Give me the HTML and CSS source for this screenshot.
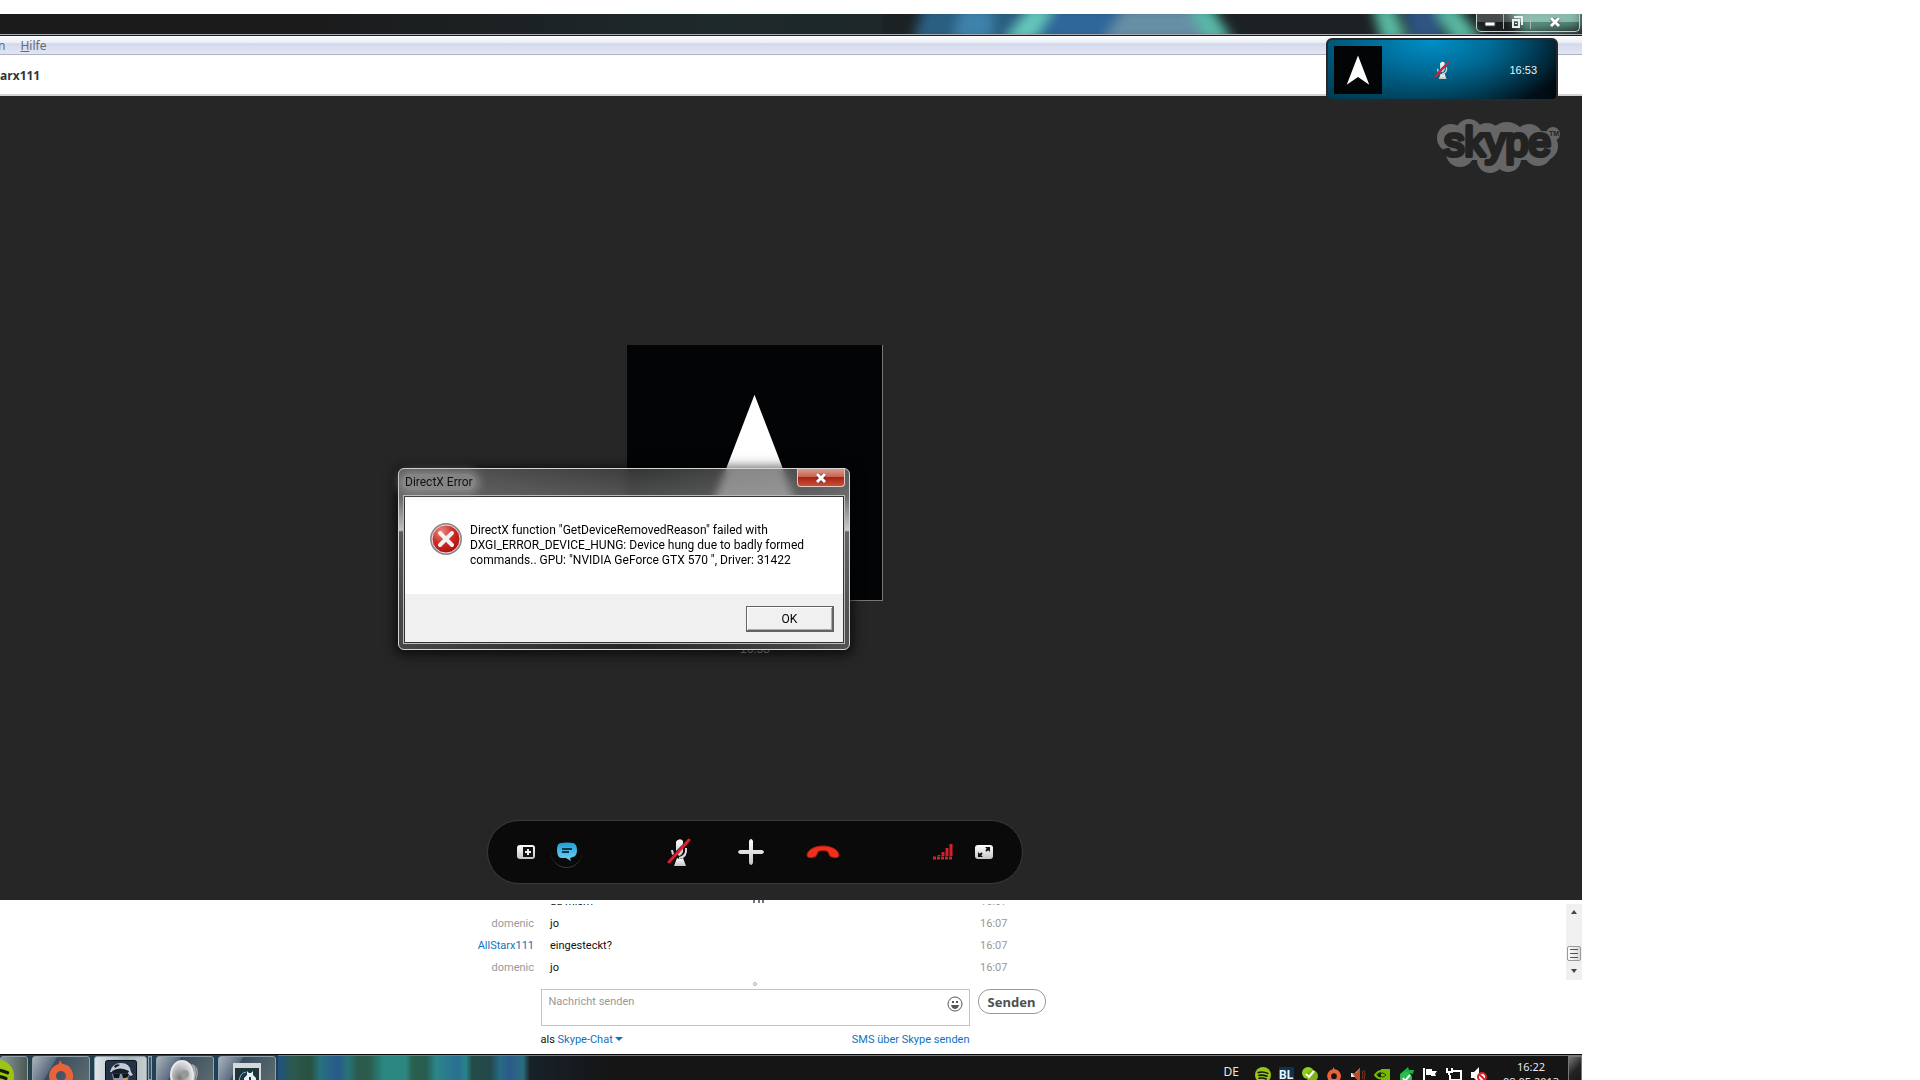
FILE: index.html
```html
<!DOCTYPE html>
<html lang="de">
<head>
<meta charset="utf-8">
<title>Skype</title>
<link rel="stylesheet" href="styles.css">
</head>
<body>
<svg class="defs" aria-hidden="true">
  <defs>
    <filter id="soft" x="-10%" y="-50%" width="120%" height="200%"><feGaussianBlur stdDeviation="6"/></filter>
    <linearGradient id="light" x1="0" y1="0" x2="0" y2="1"><stop offset="0" stop-color="#fff"/><stop offset="1" stop-color="#c4c4c4"/></linearGradient>
    <linearGradient id="bubble" x1="0" y1="0" x2="0" y2="1"><stop offset="0" stop-color="#1f9fd6"/><stop offset="1" stop-color="#6fd3fa"/></linearGradient>
    <radialGradient id="danger" cx=".35" cy=".25" r=".8"><stop offset="0" stop-color="#ea8a84"/><stop offset=".5" stop-color="#cf2a24"/><stop offset="1" stop-color="#a80c0c"/></radialGradient>
    <radialGradient id="cone" cx=".4" cy=".6" r=".7"><stop offset="0" stop-color="#777"/><stop offset=".6" stop-color="#c4c6c8"/><stop offset="1" stop-color="#eee"/></radialGradient>
    <symbol id="arrow" viewBox="0 0 256 256"><path fill="#fff" d="M128 50 188 206 128 165 68 206Z"/></symbol>
    <symbol id="mic-off" viewBox="0 0 24 28">
      <path fill="url(#light)" d="M9 4a4 4 0 0 1 7-1v3L9 13ZM10 16l6-6v4q-1 3-4 4ZM4 12h2l1 4-2 1Z"/>
      <path fill="none" stroke="#ddd" stroke-width="2" d="M19 10q1 9-7 10"/>
      <path fill="url(#light)" d="M10 20q3 2 6 0l3 8H7Z"/>
      <path stroke="#e01b32" stroke-width="3" stroke-linecap="round" d="M2 24 22 2"/>
    </symbol>
    <symbol id="swirl" viewBox="0 0 24 28"><path fill="#e8633a" fill-rule="evenodd" d="M12 0q-3 3-2 4A12 12 0 1 0 22 9q-2-4-8-5-3-1-2-4ZM12 11a5 5 0 1 1 0 10 5 5 0 0 1 0-10Z"/></symbol>
    <symbol id="waves" viewBox="0 0 20 20"><circle cx="10" cy="10" r="10" fill="#9bc516"/><path fill="none" stroke="#141a08" stroke-width="2" stroke-linecap="round" d="M4 7q6-2 12 1M5 10.500q5-1 10 1M5 14q5-1 9 1"/></symbol>
  </defs>
</svg>

<main class="desktop">
  <header class="titlebar">
    <svg class="aero" viewBox="0 0 700 20" preserveAspectRatio="none" aria-hidden="true">
      <rect width="700" height="20" fill="#1c2224"/>
      <g filter="url(#soft)">
        <path fill="#2b5f82" d="M42 -8H170L140 28H30Z"/>
        <path fill="#3c82aa" d="M80 -8H110V28H70Z"/>
        <path fill="#2f689b" d="M175 -8H260V28H150Z"/>
        <path fill="#668fa5" d="M245 -8H315L335 28H220Z"/>
        <path fill="#65c8bd" d="M150 -8H174L150 28H122Z"/>
        <path fill="#58b8a8" d="M305 -8H329L352 28H326Z"/>
        <path fill="#58b8a0" d="M490 -8H512L526 28H500Z"/>
        <path fill="#2d5583" d="M520 -8H560V28H530Z"/>
        <path fill="#58b8a0" d="M552 -8H574L602 28H570Z"/>
        <path fill="#70b09c" d="M625 -8H700V14L640 20Z"/>
      </g>
    </svg>
    <div class="caption">
      <button aria-label="Minimieren"><svg width="12" height="12"><path fill="#fff" stroke="#444" d="M1 6h10v4H1Z"/></svg></button>
      <button aria-label="Verkleinern"><svg width="12" height="12" fill="none" stroke="#eee" stroke-width="2"><path d="M4 2V1h7v7h-1M2 4h6v7H2ZM5 7v1"/></svg></button>
      <button class="caption-close" aria-label="Schließen"><svg width="12" height="10"><path stroke="#444" stroke-width="4" d="M2 1l8 8M10 1 2 9"/><path stroke="#fff" stroke-width="3" d="M2 1l8 8M10 1 2 9"/></svg></button>
    </div>
  </header>
  <nav class="menubar"><a href="#">n</a><a href="#"><u>H</u>ilfe</a></nav>
  <h1 class="contact">arx111</h1>

  <aside class="mini-call">
    <svg class="mini-avatar"><use href="#arrow"/></svg>
    <svg width="16" height="18"><use href="#mic-off"/></svg>
    <span>16:53</span>
  </aside>

  <section class="call">
    <svg class="logo" width="126" height="58" viewBox="0 0 126 58" role="img" aria-label="skype">
      <g fill="#666"><circle cx="15" cy="20" r="14"/><circle cx="33" cy="14" r="13"/><circle cx="51" cy="19" r="14"/><circle cx="71" cy="23" r="19"/><circle cx="93" cy="20" r="14"/><circle cx="107" cy="28" r="15"/><circle cx="24" cy="35" r="14"/><circle cx="102" cy="34" r="14"/><circle cx="54" cy="42" r="13"/><circle cx="72" cy="41" r="13"/><path d="M20 14H112V42H20Z"/><circle cx="117" cy="16" r="7"/></g>
      <text class="logo-word" x="8" y="38">skype</text>
      <text class="logo-tm" x="113" y="18">TM</text>
    </svg>
    <figure class="peer">
      <svg class="peer-avatar"><use href="#arrow"/></svg>
      <figcaption>16:53</figcaption>
    </figure>
    <div class="controls">
      <div class="group">
        <button aria-label="Seitenleiste"><svg width="18" height="14"><rect width="18" height="14" rx="3" fill="url(#light)"/><path fill="#111" d="M6 2h10v10H6Z"/><path stroke="#eee" stroke-width="2" fill="none" d="M8 7h6M11 4v6"/></svg></button>
        <button class="chat-toggle" aria-label="Chat"><svg width="22" height="20"><path fill="url(#bubble)" d="M5 1q6-1 12 0 4 1 4 7t-4 7l-3 1 1 3-5-3H5Q1 15 1 8t4-7Z"/><path stroke="#123646" stroke-width="2" d="M6 7h10M6 10h7"/></svg></button>
      </div>
      <div class="group main-group">
        <button aria-label="Mikrofon"><svg width="24" height="28"><use href="#mic-off"/></svg></button>
        <button aria-label="Hinzufügen"><svg width="26" height="28"><path fill="url(#light)" d="M11 3q2-4 4 0v9l9 0q4 2 0 4h-9v9q-2 4-4 0v-9H2q-4-2 0-4h9Z"/></svg></button>
        <button aria-label="Auflegen"><svg width="34" height="14"><path fill="#f0301c" stroke="#b51d10" d="M1 10C2 4 10 1 17 1s15 3 16 9c0 3-4 3-7 2-3 0-3-5-5-6q-4-1-8 0c-2 1-2 6-5 6-3 1-7 1-7-2Z"/></svg></button>
      </div>
      <div class="group">
        <button aria-label="Verbindung"><svg width="20" height="16" fill="none" stroke="#d3202f" stroke-width="3"><path d="M6 12v-1M10 12V8M14 12V4M18 12V0"/><path stroke-dasharray="3 1" d="M0 14h20"/></svg></button>
        <button aria-label="Vollbild"><svg width="18" height="14"><rect width="18" height="14" rx="3" fill="url(#light)"/><path fill="#111" d="M3 7l5 5H3ZM10 2h5v5Z"/><path stroke="#111" stroke-width="2" d="M4 11l3-3M14 3l-3 3"/></svg></button>
      </div>
    </div>
  </section>

  <section class="chat">
    <svg class="grip" width="12" height="3" fill="#6f7580"><path d="M0 0h2v3H0ZM5 0h2v3H5ZM9 0h2v3H9Z"/></svg>
    <div class="log-wrap">
      <div class="log">
        <p class="line"><span class="who"></span><span>du mich?</span><time>16:07</time></p>
        <p class="line"><span class="who">domenic</span><span>jo</span><time>16:07</time></p>
        <p class="line"><span class="who peer-name">AllStarx111</span><span>eingesteckt?</span><time>16:07</time></p>
        <p class="line"><span class="who">domenic</span><span>jo</span><time>16:07</time></p>
      </div>
      <div class="scroll">
        <svg width="6" height="4"><path fill="#444" d="M0 4 3 0l3 4Z"/></svg>
        <div class="thumb"><svg width="8" height="9"><path stroke="#555" d="M0 .5h8M0 4.500h8M0 8.500h8"/></svg></div>
        <svg width="6" height="4"><path fill="#444" d="M0 0h6L3 4Z"/></svg>
      </div>
    </div>
    <div class="compose">
      <i class="dot"></i>
      <div class="box">
        <input type="text" placeholder="Nachricht senden" aria-label="Nachricht senden">
        <button class="smile" aria-label="Emoticon"><svg width="16" height="16"><circle cx="8" cy="8" r="7" fill="none" stroke="#555"/><path fill="#555" d="M5 5h2v2H5ZM9 5h2v2H9ZM4 9h8q-1 4-4 4T4 9Z"/></svg></button>
      </div>
      <button class="send">Senden</button>
      <div class="modes"><span>als <a href="#">Skype-Chat <svg width="8" height="4"><path fill="#0f72c0" d="M0 0h8L4 4Z"/></svg></a></span><a href="#">SMS über Skype senden</a></div>
    </div>
  </section>

  <footer class="taskbar">
    <div class="tasks">
      <button class="task first" aria-label="Spotify"><svg width="32" height="32"><use href="#waves"/></svg></button>
      <button class="task" aria-label="Origin"><svg width="24" height="28"><use href="#swirl"/></svg></button>
      <button class="task active" aria-label="Spiel"><svg width="32" height="32"><rect x=".5" y=".5" width="31" height="31" rx="2" fill="#243247" stroke="#0a0f18"/><path fill="#c3cbd6" d="M5 12Q7 3 16 3t10 9l2 3-3 1-3-4H5Z"/><path fill="#161c28" d="M9 6q3-3 6-1l-5 3ZM7 11q8-5 17 0l-1 2H8Z"/><path fill="#8a97a8" d="M7 14h17l-2 13H10Z"/><path fill="#10141c" d="M8 14h7l-1 4H9ZM17 14h7l-2 4h-4ZM10 20h6v6h-5Z"/><path fill="#f7951d" d="M16 23q1-4 3-4l3-2-1 7-4 2Z"/></svg></button>
      <i class="stack"></i>
      <button class="task" aria-label="Lautsprecher"><svg width="30" height="30"><path fill="#aeb2b6" d="M14 3q10 0 13 5 2 6-1 12l-11 6Z"/><path fill="none" stroke="#777" d="M21 4q5 8 0 18M25 6q3 7 0 14"/><ellipse cx="12" cy="15" rx="11" ry="14" fill="url(#cone)" stroke="#e6e8ea" stroke-width="2"/><circle cx="15" cy="14" r="4" fill="#95999c"/></svg></button>
      <button class="task" aria-label="Programm"><svg class="low" width="28" height="28"><path fill="#d5d8da" d="M0 0h28v28H0Z"/><path fill="#2b3032" d="M2 5h24v23H2Z"/><path fill="#143842" d="M4 7h20v21H4Z"/><path fill="none" stroke="#9ab" d="M6 18q1-8 7-9"/><path fill="#e7f0f2" d="M14 8l2 2h2l2-2v4l3 3v3h-2v10h-8V18h-2v-3l3-3Z"/><path fill="#233" d="M16 14h2v14h-2Z"/></svg></button>
    </div>
    <div class="wall"></div>
    <div class="tray">
      <span class="lang">DE</span>
      <svg width="16" height="16"><use href="#waves"/></svg>
      <span class="bl">BL</span>
      <svg width="16" height="16"><circle cx="6" cy="6" r="6" fill="#8fcf1c"/><circle cx="10" cy="9" r="6" fill="#7cb518"/><path fill="none" stroke="#fff" stroke-width="2" d="M4 7l3 3 5-6"/></svg>
      <svg width="16" height="16"><use href="#swirl"/></svg>
      <svg width="16" height="16"><path fill="#e8e0dc" d="M1 6h4l5-5v14l-5-5H1Z"/><path fill="#c0482b" d="M2 6h4l4-5v14l-5-5Z"/><path fill="none" stroke="#7c3524" d="M12 4q2 4 0 8M14 3q2 5 0 10"/></svg>
      <svg width="16" height="16"><path fill="#76b900" d="M7 2h9v12H7Z"/><path fill="none" stroke="#76b900" stroke-width="2" d="M1 8q6-8 13 0-7 7-13 0Z"/><path stroke="#243a05" fill="none" d="M4 8q4-4 8 0-4 4-6 0"/></svg>
      <svg width="16" height="18"><path fill="#1fae45" d="M2 7l8-7 1 3h5l-1 4-4-1v10H2Z"/><circle cx="8" cy="11" r="6" fill="#2bbd52"/><path fill="none" stroke="#fff" stroke-width="2" d="M5 11l2 3 5-6"/></svg>
      <svg width="16" height="16"><path fill="#fff" d="M1 1h2v15H1ZM4 2h6v2h5l-2 3 1 2H9V8H4Z"/></svg>
      <svg width="16" height="16" fill="none" stroke="#fff" stroke-width="2"><path d="M7 4h8v9H4V8M1 1v4h5V1M3 5v3"/></svg>
      <svg width="17" height="16"><path fill="#fff" d="M1 5h3l5-5v16l-5-5H1Z"/><circle cx="12" cy="10" r="4" fill="#fff" stroke="#d5242c" stroke-width="2"/><path stroke="#d5242c" stroke-width="2" d="M9 7l6 6"/></svg>
      <time class="clock">16:22<br>08.05.2013</time>
      <button class="peek" aria-label="Desktop anzeigen"></button>
    </div>
  </footer>

  <div class="dialog" role="dialog" aria-labelledby="dlg">
    <div class="dialog-head"><h2 id="dlg">DirectX Error</h2><button class="dialog-close" aria-label="Schließen"><svg width="12" height="10"><path stroke="#5a2a28" stroke-width="4" d="M2 1l8 8M10 1 2 9"/><path stroke="#fff" stroke-width="3" d="M2 1l8 8M10 1 2 9"/></svg></button></div>
    <div class="dialog-inner">
      <div class="dialog-body">
        <svg width="32" height="32"><circle cx="16" cy="16" r="15" fill="url(#danger)" stroke="#8a8a8a" stroke-width="2"/><circle cx="16" cy="16" r="14" fill="none" stroke="#f3dada"/><path stroke="#f2f2f2" stroke-width="4" stroke-linecap="round" d="M10 10l12 12M22 10 10 22"/></svg>
        <p>DirectX function "GetDeviceRemovedReason" failed with<br>DXGI_ERROR_DEVICE_HUNG: Device hung due to badly formed<br>commands.. GPU: "NVIDIA GeForce GTX 570 ", Driver: 31422</p>
      </div>
      <div class="dialog-foot"><button class="ok">OK</button></div>
    </div>
  </div>
</main>
</body>
</html>
```
FILE: styles.css
```css
* { box-sizing: border-box; }
body { margin: 0; background: #fff; font: 11px/14px "Noto Sans", "Open Sans", sans-serif; color: #111; }
button { margin: 0; padding: 0; border: 0; background: none; font: inherit; color: inherit; }
svg { display: block; flex: none; }
a { color: #0f72c0; text-decoration: none; }
h1, h2, p, figure { margin: 0; font-size: inherit; }
.defs { position: absolute; width: 0; height: 0; }

.desktop { position: relative; display: flex; flex-direction: column; height: 100vh; margin-right: 338px; padding-top: 14px; overflow: hidden; }

.titlebar { position: relative; flex: none; display: flex; justify-content: flex-end; height: 22px; background: linear-gradient(90deg, #1b1b1c 20%, #1e292b 45%, #1c2224); border-bottom: 1px solid #1c1c20; box-shadow: inset 0 -1px #a9adb3; }
.aero { width: 700px; height: 20px; }
.caption { position: absolute; right: 2px; top: 0; display: flex; height: 18px; padding-bottom: 2px; border: 1px solid #c5ccca; border-top: 0; border-radius: 0 0 5px 5px; background: linear-gradient(#ffffff30 50%, #00000030 50%); }
.caption button { display: grid; place-items: center; width: 27px; border-right: 1px solid #aab3b0; }
.caption .caption-close { width: 48px; border: 0; }

.menubar { flex: none; display: flex; align-items: center; gap: 15px; height: 19px; padding-top: 2px; font-size: 12px; background: linear-gradient(#fff, #e8edf6 38%, #d4daec 42%, #e1e5f6); border-bottom: 1px solid #b0b3c6; }
.menubar a { color: #696a76; }
.menubar a:first-child { margin-left: -2px; }
.contact { flex: none; height: 41px; padding-top: 14px; font: bold 12px/14px "Open Sans", sans-serif; color: #333; border-bottom: 2px solid #d0d3d3; }

.mini-call { position: absolute; z-index: 2; right: 24px; top: 38px; display: flex; align-items: center; justify-content: space-between; width: 232px; height: 63px; padding: 0 19px 0 6px; border: 2px solid #26292b; border-radius: 6px; color: #e8f4f8; font: 11px/14px "Liberation Sans", sans-serif; background: radial-gradient(ellipse 150px 75px at 45% 0, #0090c8, #006c98 40%, #00000000), linear-gradient(90deg, #003d55, #00222f 60%, #000a10); }
.mini-avatar { width: 48px; height: 48px; margin-right: -8px; background: #030406; }

.call { position: relative; flex: 1; display: flex; flex-direction: column; align-items: center; justify-content: space-between; min-height: 0; padding: 249px 72px 16px 0; background: #262626; }
.logo { position: absolute; right: 20px; top: 22px; }
.logo-word { font: 41px "Liberation Sans", sans-serif; fill: #232323; stroke: #232323; stroke-width: 4px; stroke-linejoin: round; }
.logo-tm { font: bold 7px "Liberation Sans", sans-serif; fill: #232323; }
.peer { display: flex; flex-direction: column; align-items: center; gap: 41px; }
.peer-avatar { width: 256px; height: 256px; background: #030406; border: solid #777; border-width: 0 1px 1px 0; }
.peer figcaption { font: 12px/14px "Liberation Sans", sans-serif; color: #999; }
.controls { display: flex; align-items: center; justify-content: space-between; width: 536px; height: 64px; padding: 0 29px; border: 1px solid #3a3a3a; border-radius: 32px; background: #0a0a0a; }
.group { display: flex; align-items: center; gap: 22px; }
.group:first-child { gap: 16px; }
.chat-toggle { display: grid; place-items: center; width: 31px; height: 31px; border-radius: 50%; border-bottom: 1px solid #3a3a3a; }
.main-group { gap: 38px; margin-right: 14px; }
.main-group button { display: grid; place-items: center; width: 34px; }

.chat { position: relative; flex: none; height: 154px; padding-top: 4px; background: #fff; font-family: Roboto, sans-serif; }
.grip { position: absolute; left: calc(50% - 38px); top: 0; }
.log-wrap { position: relative; display: flex; height: 76px; justify-content: center; overflow: hidden; padding-right: 72px; }
.log { display: flex; flex-direction: column; justify-content: flex-end; width: 602px; }
.line { flex: none; display: grid; grid-template-columns: 80px 414px 1fr; gap: 16px; height: 22px; line-height: 20px; }
.who { text-align: right; color: #999; }
.peer-name { color: #0f72c0; }
.line time { color: #999; }
.scroll { position: absolute; right: 0; top: 0; display: flex; flex-direction: column; align-items: center; width: 16px; height: 76px; padding: 6px 0 7px; background: #f0f0f0; }
.scroll .thumb { display: grid; place-items: center; width: 14px; height: 15px; margin: auto 0 8px; border: 1px solid #999; border-radius: 2px; background: linear-gradient(90deg, #fff, #d8d8d8); }
.compose { display: grid; grid-template-columns: 68px 429px 68px; justify-content: center; column-gap: 8px; padding-right: 72px; }
.dot { grid-column: 1 / -1; justify-self: center; width: 4px; height: 4px; margin: 2px 0 3px; border: 1px solid #aaa; border-radius: 50%; }
.box { grid-column: 2; display: flex; align-items: flex-start; height: 37px; border: 1px solid #c4c4c4; }
.box input { flex: 1; min-width: 0; height: 22px; padding: 0 7px; border: 0; outline: 0; font: inherit; background: none; }
.box input::placeholder { color: #999; opacity: 1; }
.smile { margin: 6px 6px 0 0; }
.send { height: 25px; border: 1px solid #999; border-radius: 12px; font: bold 13px/22px "Noto Sans", sans-serif; color: #4b5054; }
.modes { grid-column: 2; display: flex; justify-content: space-between; padding-top: 6px; line-height: 16px; }
.modes svg { display: inline-block; vertical-align: 2px; }

.taskbar { flex: none; display: flex; height: 26px; overflow: hidden; color: #e8e8e8; border-top: 1px solid #0c0c0c; background: #141414; box-shadow: inset 0 1px #77797c; }
.tasks { display: flex; gap: 4px; padding: 1px 2px 0 0; background: linear-gradient(90deg, #27414c, #1d3f58); }
.task { flex: none; width: 58px; height: 40px; display: flex; justify-content: center; padding-top: 3px; border: 1px solid #93a3ad; border-radius: 3px; background: linear-gradient(120deg, #aab3bc, #5b6c80 30%, #3b4c62 32%, #4a5c68 60%, #64706e); }
.task .low { margin-top: 3px; }
.task.first { width: 28px; padding-right: 13px; justify-content: flex-end; background: linear-gradient(90deg, #8d989a, #4c5855); }
.task.active { width: 53px; background: linear-gradient(90deg, #dfe6ea, #a6b0b4 60%, #c5cfcf); }
.stack { width: 4px; margin-left: -3px; border: 1px solid #93a3ad; background: #38556a; }
.wall { width: 252px; margin-top: 1px; background: linear-gradient(90deg, #21527f 0, #2c5a4c 15px, #28503f 32px, #26717c 42px, #28598b 60px, #277378 70px, #2c5a4c 80px, #2a5e4e 92px, #2b8582 105px, #2d8780 128px, #29604f 134px, #285c4f 148px, #2b8689 158px, #2a6f92 180px, #27838a 188px, #234c49 194px, #23484a 212px, #286a86 222px, #2b5a8a 232px, #2a6d80 245px, #1c2224 252px); }
.tray { flex: 1; display: flex; align-items: flex-start; justify-content: flex-end; gap: 8px; padding-top: 12px; background: linear-gradient(90deg, #18222a, #151515 80px); box-shadow: inset 0 1px #77797c; }
.lang { margin: -3px 8px 0 0; font-size: 12px; line-height: 16px; }
.bl { width: 15px; font: bold 12px/16px Roboto, sans-serif; color: #e8f6ff; background: #0c3450; }
.clock { width: 72px; margin: -8px -3px 0 0; font-size: 11px; line-height: 15px; text-align: center; }
.peek { width: 14px; height: 40px; margin: -11px 0 0 -4px; border: 1px solid #777; background: linear-gradient(135deg, #777, #222 40%, #111); }

.dialog { position: absolute; z-index: 3; left: calc(50% - 393px); top: 468px; width: 452px; padding: 0 6px 6px; border: 1px solid #d4d4d4; border-radius: 6px; box-shadow: 0 2px 12px 3px #000a; background: linear-gradient(90deg, #8885, #0000 50%, #aaa3 85%, #aaa5), linear-gradient(#4a4a4ab0, #666b 15%, #ddd 34%, #444 35%, #262626 80%); backdrop-filter: blur(4px); }
.dialog-head { display: flex; justify-content: space-between; height: 27px; }
.dialog-head h2 { align-self: flex-start; margin: 5px 0 0 -3px; padding: 0 3px; border-radius: 8px; font: 12px/16px Roboto, sans-serif; background: #aaa8; box-shadow: 0 0 8px 4px #aaa8; }
.dialog-close { display: grid; place-items: center; width: 48px; height: 18px; margin-right: -2px; border: 1px solid #e3c8c4; border-top: 0; border-radius: 0 0 4px 4px; background: linear-gradient(#d99a8f, #c8604e 48%, #a92312 50%, #c8503a); }
.dialog-inner { margin: 0 -1px; border: 1px solid #333; outline: 1px solid #bbb; background: #fff; }
.dialog-body { display: flex; gap: 8px; height: 97px; padding: 26px 0 0 25px; }
.dialog-body p { font: 12px/15px Roboto, sans-serif; white-space: nowrap; color: #000; }
.dialog-foot { display: flex; justify-content: flex-end; height: 48px; padding: 12px 9px 0 0; background: #f0f0f0; }
.ok { width: 88px; height: 26px; border: 1px solid #646464; border-width: 1px 2px 2px 1px; box-shadow: inset 1px 1px #fff, inset -1px -1px #aaa; font: 12px/16px Roboto, sans-serif; color: #000; }
```
